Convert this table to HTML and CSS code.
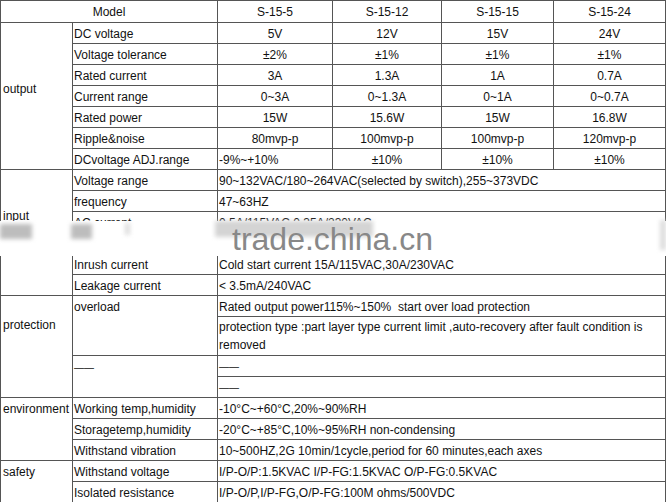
FILE: index.html
```html
<!DOCTYPE html>
<html>
<head>
<meta charset="utf-8">
<title>S-15 specification</title>
<link rel="stylesheet" href="styles.css">
</head>
<body>
<div class="sheet">
<table class="spec">
<colgroup>
<col class="c-group"><col class="c-item"><col class="c-m1"><col class="c-m2"><col class="c-m3"><col class="c-m4">
</colgroup>
<tr class="head"><td colspan="2" class="ctr">Model</td><td class="ctr">S-15-5</td><td class="ctr">S-15-12</td><td class="ctr">S-15-15</td><td class="ctr">S-15-24</td></tr>
<tr><td rowspan="7" class="grp grp-output">output</td><td>DC voltage</td><td class="ctr">5V</td><td class="ctr">12V</td><td class="ctr">15V</td><td class="ctr">24V</td></tr>
<tr><td>Voltage tolerance</td><td class="ctr">±2%</td><td class="ctr">±1%</td><td class="ctr">±1%</td><td class="ctr">±1%</td></tr>
<tr><td>Rated current</td><td class="ctr">3A</td><td class="ctr">1.3A</td><td class="ctr">1A</td><td class="ctr">0.7A</td></tr>
<tr><td>Current range</td><td class="ctr">0~3A</td><td class="ctr">0~1.3A</td><td class="ctr">0~1A</td><td class="ctr">0~0.7A</td></tr>
<tr><td>Rated power</td><td class="ctr">15W</td><td class="ctr">15.6W</td><td class="ctr">15W</td><td class="ctr">16.8W</td></tr>
<tr><td>Ripple&amp;noise</td><td class="ctr">80mvp-p</td><td class="ctr">100mvp-p</td><td class="ctr">100mvp-p</td><td class="ctr">120mvp-p</td></tr>
<tr><td>DCvoltage ADJ.range</td><td>-9%~+10%</td><td class="ctr">±10%</td><td class="ctr">±10%</td><td class="ctr">±10%</td></tr>
<tr><td rowspan="6" class="grp grp-input">input</td><td>Voltage range</td><td colspan="4">90~132VAC/180~264VAC(selected by switch),255~373VDC</td></tr>
<tr><td>frequency</td><td colspan="4">47~63HZ</td></tr>
<tr><td>AC current</td><td colspan="4">0.5A/115VAC 0.35A/230VAC</td></tr>
<tr><td></td><td colspan="4"></td></tr>
<tr><td>Inrush current</td><td colspan="4">Cold start current 15A/115VAC,30A/230VAC</td></tr>
<tr><td>Leakage current</td><td colspan="4">&lt; 3.5mA/240VAC</td></tr>
<tr><td rowspan="4" class="grp grp-prot">protection</td><td rowspan="2" class="top">overload</td><td colspan="4">Rated output power115%~150%&nbsp; start over load protection</td></tr>
<tr><td colspan="4" class="wrap">protection type :part layer type current limit ,auto-recovery after fault condition is removed</td></tr>
<tr><td rowspan="2" class="top"><span class="dash">——</span></td><td colspan="4"><span class="dash">——</span></td></tr>
<tr><td colspan="4"><span class="dash">——</span></td></tr>
<tr><td rowspan="3" class="grp grp-top">environment</td><td>Working temp,humidity</td><td colspan="4">-10°C~+60°C,20%~90%RH</td></tr>
<tr><td>Storagetemp,humidity</td><td colspan="4">-20°C~+85°C,10%~95%RH non-condensing</td></tr>
<tr><td>Withstand vibration</td><td colspan="4">10~500HZ,2G 10min/1cycle,period for 60 minutes,each axes</td></tr>
<tr><td rowspan="2" class="grp grp-top">safety</td><td>Withstand voltage</td><td colspan="4">I/P-O/P:1.5KVAC I/P-FG:1.5KVAC O/P-FG:0.5KVAC</td></tr>
<tr><td>Isolated resistance</td><td colspan="4">I/P-O/P,I/P-FG,O/P-FG:100M ohms/500VDC</td></tr>
</table>
<div class="wm">
<div class="wm-band"></div>
<div class="smear s1"></div>
<div class="smear s2"></div>
<div class="smear s3"></div>
<div class="smear s4"></div>
<div class="smear s5"></div>
<div class="wm-text">trade.china.cn</div>
</div>
</div>
</body>
</html>
```

FILE: styles.css
```css
html, body {
  margin: 0;
  padding: 0;
  background: #fff;
}
body {
  font-family: "Liberation Sans", Arial, sans-serif;
  font-size: 12px;
  color: #111;
}
.sheet {
  position: relative;
  width: 666px;
  height: 502px;
  overflow: hidden;
}
.spec {
  border-collapse: collapse;
  table-layout: fixed;
  width: 665px;
}
.c-group { width: 72px; }
.c-item { width: 145px; }
.c-m1 { width: 115px; }
.c-m2 { width: 109px; }
.c-m3 { width: 112px; }
.c-m4 { width: 112px; }
.spec tr { height: 21px; }
.spec tr.head { height: 22px; }
.spec td {
  border: 1px solid #555;
  padding: 1px 1px 0 1px;
  line-height: 14px;
  white-space: nowrap;
  vertical-align: middle;
  text-align: left;
}
.spec td.ctr { text-align: center; }
.spec td.top { vertical-align: top; padding-top: 4px; }
.spec td.wrap {
  white-space: normal;
  line-height: 18px;
  padding-top: 1px;
  padding-bottom: 1px;
}
.spec td.grp {
  vertical-align: top;
  padding-left: 2px;
}
.grp-output { padding-top: 59px !important; }
.grp-input { padding-top: 39px !important; }
.grp-prot { padding-top: 22px !important; }
.grp-top { padding-top: 4px !important; }
.dash {
  font-size: 10px;
  letter-spacing: 0;
}
.wm {
  position: absolute;
  left: 0;
  top: 0;
  width: 666px;
  height: 502px;
  pointer-events: none;
}
.wm-band {
  position: absolute;
  left: 0;
  top: 221px;
  width: 666px;
  height: 35px;
  background: #fff;
}
.smear {
  position: absolute;
  background: #bdbdbd;
  filter: blur(2px);
}
.s1 { left: 0; top: 224px; width: 32px; height: 15px; }
.s2 { left: 71px; top: 224px; width: 21px; height: 15px; }
.s3 { left: 125px; top: 223px; width: 5px; height: 12px; background: #ddd; }
.s4 { left: 215px; top: 221px; width: 158px; height: 16px; background: #d4d4d4; }
.s5 { left: 660px; top: 220px; width: 6px; height: 30px; background: #ddd; }
.wm-text {
  position: absolute;
  left: 232px;
  top: 225px;
  font-size: 32px;
  line-height: 28px;
  color: #888;
  white-space: nowrap;
}
```
